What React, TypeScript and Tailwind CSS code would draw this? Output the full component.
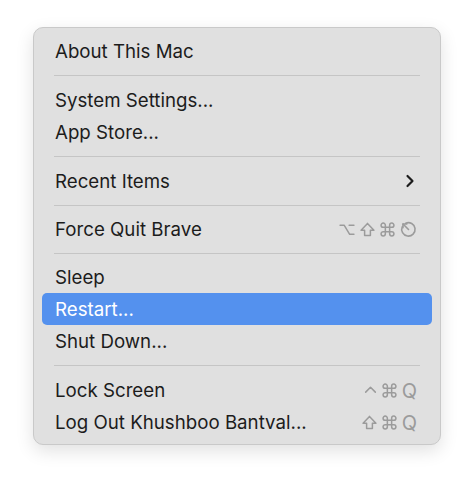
import { ChevronRight } from "lucide-react"

type Item = {
  label: string
  shortcut?: string[]
  submenu?: boolean
  active?: boolean
}

// macOS key glyphs, drawn so they match the menu's thin outlined style
function KeyGlyph({ k }: { k: string }) {
  const common = {
    fill: "none",
    stroke: "currentColor",
    strokeWidth: 1.4,
    strokeLinecap: "round" as const,
    strokeLinejoin: "round" as const,
  }
  if (k === "opt")
    return (
      <svg width="16" height="15" viewBox="0 0 15 14" {...common}>
        <path d="M1 3 H4.8 L10 11.5 H14 M9.5 3 H14" />
      </svg>
    )
  if (k === "shift")
    return (
      <svg width="15" height="15" viewBox="0 0 14 14" {...common}>
        <path d="M7 1.3 L1 7.6 H4.3 V12.6 H9.7 V7.6 H13 Z" />
      </svg>
    )
  if (k === "cmd")
    return (
      <svg width="15" height="15" viewBox="0 0 14 14" {...common}>
        <path d="M5 5 V3 A2 2 0 1 0 3 5 H11 A2 2 0 1 0 9 3 V11 A2 2 0 1 0 11 9 H3 A2 2 0 1 0 5 11 Z" />
      </svg>
    )
  if (k === "ctrl")
    return (
      <svg width="13" height="15" viewBox="0 0 12 14" {...common}>
        <path d="M1.5 8.5 L6 4 L10.5 8.5" />
      </svg>
    )
  if (k === "esc")
    return (
      <svg width="17" height="17" viewBox="0 0 16 16" {...common} strokeWidth={1.5}>
        <path d="M5.4 2.1 A6.3 6.3 0 1 1 2.1 5.4" />
        <path d="M2.8 2.8 L8 8" />
        <path d="M2.8 2.8 V6.4 M2.8 2.8 H6.4" />
      </svg>
    )
  return <span className="text-[20px] leading-none">{k}</span>
}

function Row({ item }: { item: Item }) {
  return (
    <div
      className={
        "flex h-8 items-center rounded-[5px] pl-[13px] pr-[15px] " +
        (item.active ? "bg-[#5491ee] text-white" : "text-[#1c1c1c]")
      }
    >
      <span className="flex-1 pt-[2px] text-[18.7px]">{item.label}</span>
      {item.submenu && <ChevronRight size={20} strokeWidth={2.6} className="mr-[-3px] text-[#1c1c1c]" />}
      {item.shortcut && (
        <span className="flex items-center gap-[5px] pt-px text-[#9b9b9b]">
          {item.shortcut.map((k, i) => (
            <KeyGlyph key={i} k={k} />
          ))}
        </span>
      )}
    </div>
  )
}

function Separator({ h }: { h: string }) {
  return (
    <div className={"flex items-center px-3 " + h}>
      <div className="h-px w-full bg-[#c5c5c5]" />
    </div>
  )
}

export default function App() {
  return (
    <div className="min-h-[485px] w-[474px] bg-white pl-[33px] pt-[27px] font-['Inter',sans-serif]">
      <div className="w-[408px] rounded-[10px] border border-[#c9c9c9] bg-[#e0e0e0] px-2 pb-[6px] pt-[7px] shadow-[0_6px_18px_rgba(0,0,0,0.12)]">
        <Row item={{ label: "About This Mac" }} />
        <Separator h="h-[17px]" />
        <Row item={{ label: "System Settings..." }} />
        <Row item={{ label: "App Store..." }} />
        <Separator h="h-[17px]" />
        <Row item={{ label: "Recent Items", submenu: true }} />
        <Separator h="h-4" />
        <Row item={{ label: "Force Quit Brave", shortcut: ["opt", "shift", "cmd", "esc"] }} />
        <Separator h="h-4" />
        <Row item={{ label: "Sleep" }} />
        <Row item={{ label: "Restart...", active: true }} />
        <Row item={{ label: "Shut Down..." }} />
        <Separator h="h-[17px]" />
        <Row item={{ label: "Lock Screen", shortcut: ["ctrl", "cmd", "Q"] }} />
        <Row item={{ label: "Log Out Khushboo Bantval...", shortcut: ["shift", "cmd", "Q"] }} />
      </div>
    </div>
  )
}
